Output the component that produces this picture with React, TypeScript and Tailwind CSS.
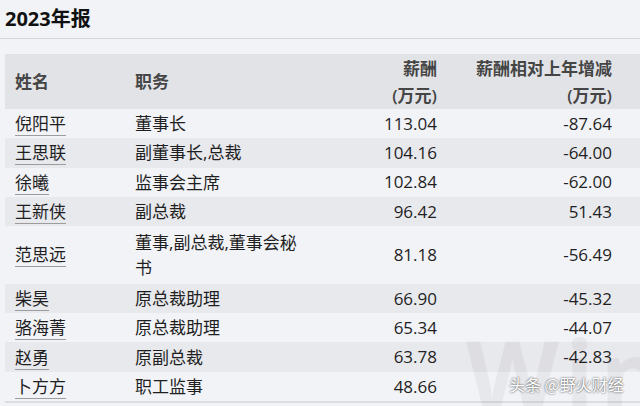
const rows = [
  { name: "倪阳平", title: ["董事长"], pay: "113.04", delta: "-87.64" },
  { name: "王思联", title: ["副董事长,总裁"], pay: "104.16", delta: "-64.00" },
  { name: "徐曦", title: ["监事会主席"], pay: "102.84", delta: "-62.00" },
  { name: "王新侠", title: ["副总裁"], pay: "96.42", delta: "51.43" },
  { name: "范思远", title: ["董事,副总裁,董事会秘", "书"], pay: "81.18", delta: "-56.49" },
  { name: "柴昊", title: ["原总裁助理"], pay: "66.90", delta: "-45.32" },
  { name: "骆海菁", title: ["原总裁助理"], pay: "65.34", delta: "-44.07" },
  { name: "赵勇", title: ["原副总裁"], pay: "63.78", delta: "-42.83" },
  { name: "卜方方", title: ["职工监事"], pay: "48.66", delta: "" },
];

export default function App() {
  return (
    <div
      className="relative w-[640px] h-[406px] overflow-hidden bg-[#f2f3f7] text-[#1f1f1f]"
      style={{ fontFamily: '"Open Sans", "Noto Sans CJK SC", sans-serif' }}
    >
      <div className="h-[39px] flex items-center pl-[5px] border-b border-[#d3d5da]">
        <h2 className="text-[20px] font-bold text-[#111] leading-none">2023年报</h2>
      </div>

      <div className="mt-[15px] ml-[5px] border-b-2 border-[#dcdde1]">
        <div className="flex h-[55px] bg-[#e2e3e7] text-[17px] font-semibold text-[#454545]">
          <div className="w-[120px] pl-[10px] flex items-center">姓名</div>
          <div className="w-[190px] pl-[10px] flex items-center">职务</div>
          <div className="w-[132px] pr-[10px] flex flex-col justify-center items-end leading-[27px]">
            <span>薪酬</span>
            <span>(万元)</span>
          </div>
          <div className="w-[175px] pr-[10px] flex flex-col justify-center items-end leading-[27px]">
            <span>薪酬相对上年增减</span>
            <span>(万元)</span>
          </div>
        </div>

        {rows.map((r, i) => (
          <div
            key={r.name}
            className={`flex text-[17px] ${r.title.length > 1 ? "h-[57.6px]" : "h-[29.3px]"} ${
              i % 2 === 1 ? "bg-[#e8e9ed]" : ""
            }`}
          >
            <div className="w-[120px] pl-[10px] flex items-center">
              <span className="underline decoration-[#9c9c9c] underline-offset-[5px] leading-none">{r.name}</span>
            </div>
            <div className="w-[190px] pl-[10px] flex flex-col justify-center leading-[25px]">
              {r.title.map((t) => (
                <span key={t}>{t}</span>
              ))}
            </div>
            <div className="w-[132px] pr-[10px] flex items-center justify-end">{r.pay}</div>
            <div className="w-[175px] pr-[10px] flex items-center justify-end">{r.delta}</div>
          </div>
        ))}
      </div>

      {/* watermarks */}
      <div className="absolute left-[466px] top-[326px] text-[96px] font-bold leading-none text-black/[0.045] tracking-[6px] pointer-events-none">
        Wind
      </div>
      <div
        className="absolute left-[509px] top-[376px] text-[16px] text-white leading-none [text-shadow:0_0_2px_rgba(0,0,0,0.85)]"
        style={{ fontFamily: '"Noto Sans CJK SC", sans-serif' }}
      >
        头条 @野火财经
      </div>
    </div>
  );
}
